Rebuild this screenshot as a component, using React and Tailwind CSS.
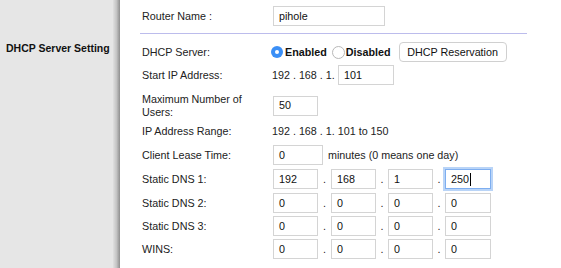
import React from "react";

const font = { fontFamily: '"Liberation Sans", Arial, sans-serif' };

function Box({ value, w, focused }) {
  return (
    <div
      className={
        "h-[20px] flex items-center pl-[5px] text-[10.75px] text-[#111] bg-white " +
        (focused
          ? "border border-[#7eaef0] shadow-[0_0_0_2px_#b9d4f7]"
          : "border border-[#d4d4d4]")
      }
      style={{ width: w }}
    >
      {value}
      {focused && <span className="ml-px w-px h-[13px] bg-black" />}
    </div>
  );
}

function IpBoxes({ vals, focusLast }) {
  return (
    <div className="flex items-center">
      <Box value={vals[0]} w={45} />
      <span className="w-[13px] text-center text-[10.75px]">.</span>
      <Box value={vals[1]} w={45} />
      <span className="w-[12px] text-center text-[10.75px]">.</span>
      <Box value={vals[2]} w={45} />
      <span className="w-[12px] text-center text-[10.75px]">.</span>
      <Box value={vals[3]} w={46} focused={focusLast} />
    </div>
  );
}

function Row({ label, children, className = "h-[20px]" }) {
  return (
    <div className={"flex items-center " + className}>
      <div className="w-[131px] shrink-0 text-[10.75px] text-[#222] leading-[13px]">
        {label}
      </div>
      <div className="flex items-center text-[10.75px] text-[#222]">{children}</div>
    </div>
  );
}

export default function App() {
  return (
    <div className="w-[561px] h-[268px] flex bg-white overflow-hidden" style={font}>
      <div className="w-[113px] shrink-0 bg-[#e6e6e6] pt-[41px] pl-[6px]">
        <div className="text-[10.5px] font-bold text-[#111] whitespace-nowrap leading-[14px]">
          DHCP Server Setting
        </div>
      </div>
      <div className="w-[7px] shrink-0 bg-gradient-to-r from-[#e0e0e0] via-[#c4c4c4] to-[#8f8f8f]" />
      <div className="flex-1 flex flex-col pl-[22px] pt-[6px]">
        <Row label="Router Name :">
          <Box value="pihole" w={112} />
        </Row>
        <div className="mt-[7px] h-px w-[387px] -ml-[2px] bg-[#bcbcec]" />
        <Row label="DHCP Server:" className="mt-[8px] h-[20px]">
          <div className="flex items-center -ml-[2px]">
            <span className="w-[12px] h-[12px] rounded-full bg-[#3b8ff6] flex items-center justify-center">
              <span className="w-[4px] h-[4px] rounded-full bg-white" />
            </span>
            <span className="ml-[2px] font-bold text-[#111]">Enabled</span>
            <span className="ml-[5px] w-[13px] h-[13px] rounded-full border border-[#b8b8b8] bg-white" />
            <span className="ml-px font-bold text-[#111]">Disabled</span>
            <span className="ml-[8px] h-[20px] w-[108px] flex items-center justify-center rounded-[4px] border border-[#d0d0d0] bg-white text-[#111]">
              DHCP Reservation
            </span>
          </div>
        </Row>
        <Row label="Start IP Address:" className="mt-[3px] h-[20px]">
          <span className="-ml-px w-[66px] whitespace-nowrap">192 . 168 . 1.</span>
          <Box value="101" w={56} />
        </Row>
        <Row
          label={
            <>
              Maximum Number of
              <br />
              Users:
            </>
          }
          className="mt-[5px] h-[31px]"
        >
          <Box value="50" w={45} />
        </Row>
        <Row label="IP Address Range:" className="h-[20px]">
          <span className="-ml-px whitespace-nowrap">192 . 168 . 1. 101 to 150</span>
        </Row>
        <Row label="Client Lease Time:" className="mt-[4px] h-[20px]">
          <Box value="0" w={50} />
          <span className="ml-[5px] whitespace-nowrap">minutes (0 means one day)</span>
        </Row>
        <Row label="Static DNS 1:" className="mt-[4px] h-[20px]">
          <IpBoxes vals={["192", "168", "1", "250"]} focusLast />
        </Row>
        <Row label="Static DNS 2:" className="mt-[4px] h-[20px]">
          <IpBoxes vals={["0", "0", "0", "0"]} />
        </Row>
        <Row label="Static DNS 3:" className="mt-[3px] h-[20px]">
          <IpBoxes vals={["0", "0", "0", "0"]} />
        </Row>
        <Row label="WINS:" className="mt-[3px] h-[20px]">
          <IpBoxes vals={["0", "0", "0", "0"]} />
        </Row>
      </div>
    </div>
  );
}
